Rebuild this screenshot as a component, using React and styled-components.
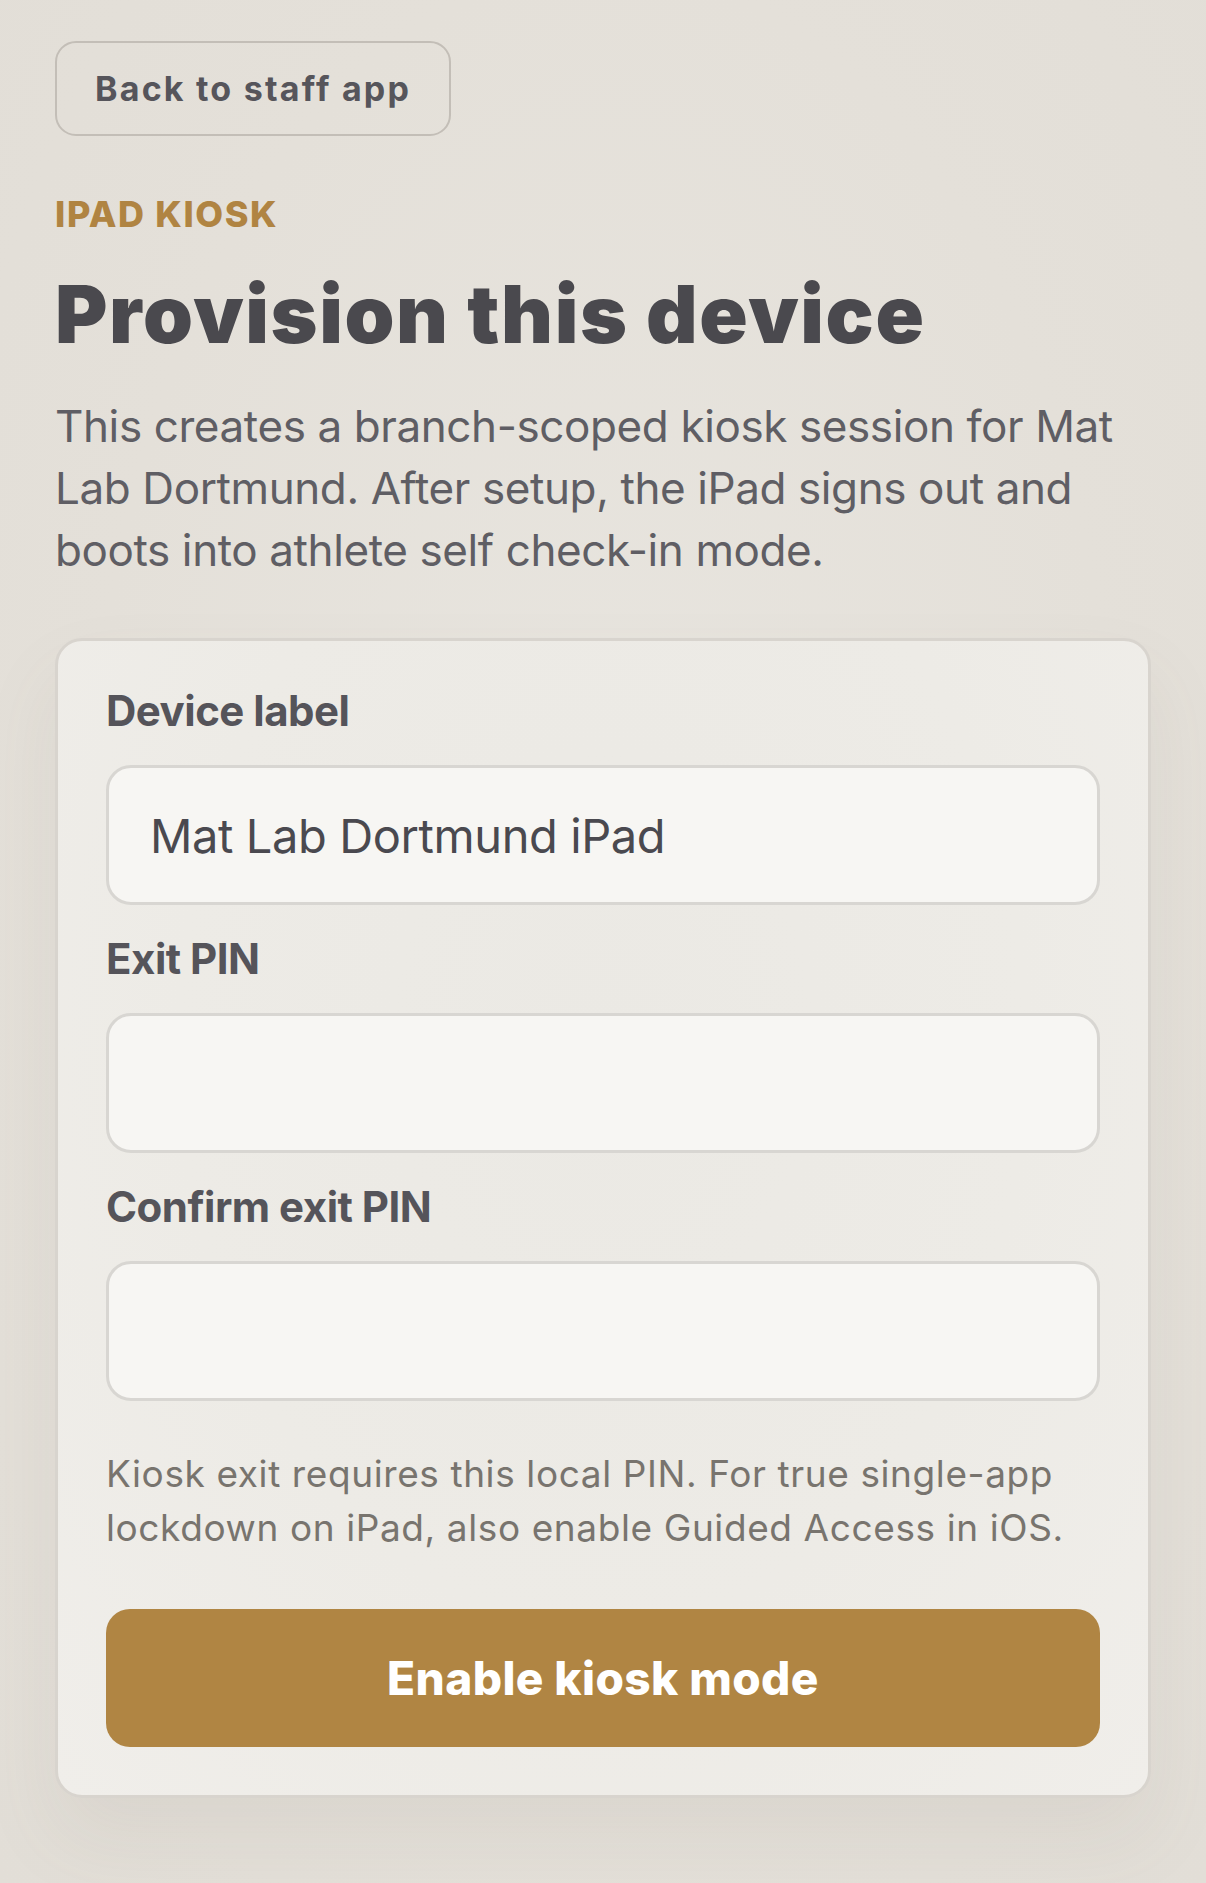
import styled, { createGlobalStyle } from "styled-components";

const GlobalStyle = createGlobalStyle`
  * {
    box-sizing: border-box;
  }
  body {
    margin: 0;
    background: #e4e0d9;
    font-family: Inter, "Noto Sans", sans-serif;
    -webkit-font-smoothing: antialiased;
  }
`;

const Page = styled.main`
  min-height: 1883px;
  padding: 41px 55px 80px;
  background: radial-gradient(
    ellipse at 50% 45%,
    #e8e5df 0%,
    #e4e0d9 60%,
    #e2ded7 100%
  );
`;

const BackButton = styled.button`
  display: inline-flex;
  align-items: center;
  height: 95px;
  padding: 0 38px;
  border: 2.5px solid #c3beb7;
  border-radius: 21px;
  background: transparent;
  color: #56555b;
  font-family: inherit;
  font-size: 34px;
  font-weight: 700;
  letter-spacing: 2.2px;
  cursor: pointer;
`;

const Eyebrow = styled.div`
  margin-top: 56px;
  font-size: 36px;
  line-height: 44px;
  font-weight: 800;
  letter-spacing: 1.6px;
  color: #b08442;
  text-transform: uppercase;
`;

const Title = styled.h1`
  margin: 33px 0 0;
  font-size: 80px;
  line-height: 90px;
  font-weight: 900;
  letter-spacing: 1.6px;
  color: #4a494e;
`;

const Intro = styled.p`
  margin: 36px 0 0;
  font-size: 44px;
  line-height: 62px;
  font-weight: 400;
  letter-spacing: -0.4px;
  color: #5f5e64;
`;

const Card = styled.form`
  margin-top: 57px;
  padding: 45px 48px 48px;
  border: 3px solid #d8d4ce;
  border-radius: 27px;
  background: radial-gradient(
    ellipse at 50% 35%,
    #ebe9e4 0%,
    #edebe6 55%,
    #f0eeea 100%
  );
  box-shadow: 0 40px 80px rgba(120, 105, 85, 0.08);
  display: flex;
  flex-direction: column;
`;

const Field = styled.div`
  display: flex;
  flex-direction: column;
  & + & {
    margin-top: 29px;
  }
`;

const Label = styled.label`
  font-size: 42px;
  line-height: 50px;
  font-weight: 700;
  letter-spacing: -0.5px;
  color: #55545a;
  margin-bottom: 29px;
`;

const Input = styled.input`
  height: 140px;
  padding: 0 41px;
  border: 3px solid #d8d6d2;
  border-radius: 25px;
  background: #f7f6f3;
  color: #4a494f;
  font-family: inherit;
  font-size: 47px;
  letter-spacing: -0.4px;
  outline: none;
`;

const Hint = styled.p`
  margin: 46px 0 0;
  font-size: 37px;
  line-height: 54px;
  letter-spacing: 0.6px;
  color: #78746e;
`;

const SubmitButton = styled.button`
  margin-top: 54px;
  height: 138px;
  border: none;
  border-radius: 24px;
  background: #b08543;
  color: #ffffff;
  font-family: inherit;
  font-size: 46px;
  font-weight: 800;
  letter-spacing: 0.4px;
  cursor: pointer;
`;

const fields = [
  { id: "label", label: "Device label", value: "Mat Lab Dortmund iPad", type: "text" },
  { id: "pin", label: "Exit PIN", value: "", type: "password" },
  { id: "confirm", label: "Confirm exit PIN", value: "", type: "password" },
];

const App = () => {
  return (
    <>
      <GlobalStyle />
      <Page>
        <BackButton type="button">Back to staff app</BackButton>
        <Eyebrow>iPad kiosk</Eyebrow>
        <Title>Provision this device</Title>
        <Intro>
          This creates a branch-scoped kiosk session for Mat Lab Dortmund.
          After setup, the iPad signs out and boots into athlete self check-in
          mode.
        </Intro>
        <Card onSubmit={(e) => e.preventDefault()}>
          {fields.map((f) => (
            <Field key={f.id}>
              <Label htmlFor={f.id}>{f.label}</Label>
              <Input id={f.id} type={f.type} defaultValue={f.value} />
            </Field>
          ))}
          <Hint>
            Kiosk exit requires this local PIN. For true single-app lockdown on
            iPad, also enable Guided Access in iOS.
          </Hint>
          <SubmitButton type="submit">Enable kiosk mode</SubmitButton>
        </Card>
      </Page>
    </>
  );
};

export default App;
